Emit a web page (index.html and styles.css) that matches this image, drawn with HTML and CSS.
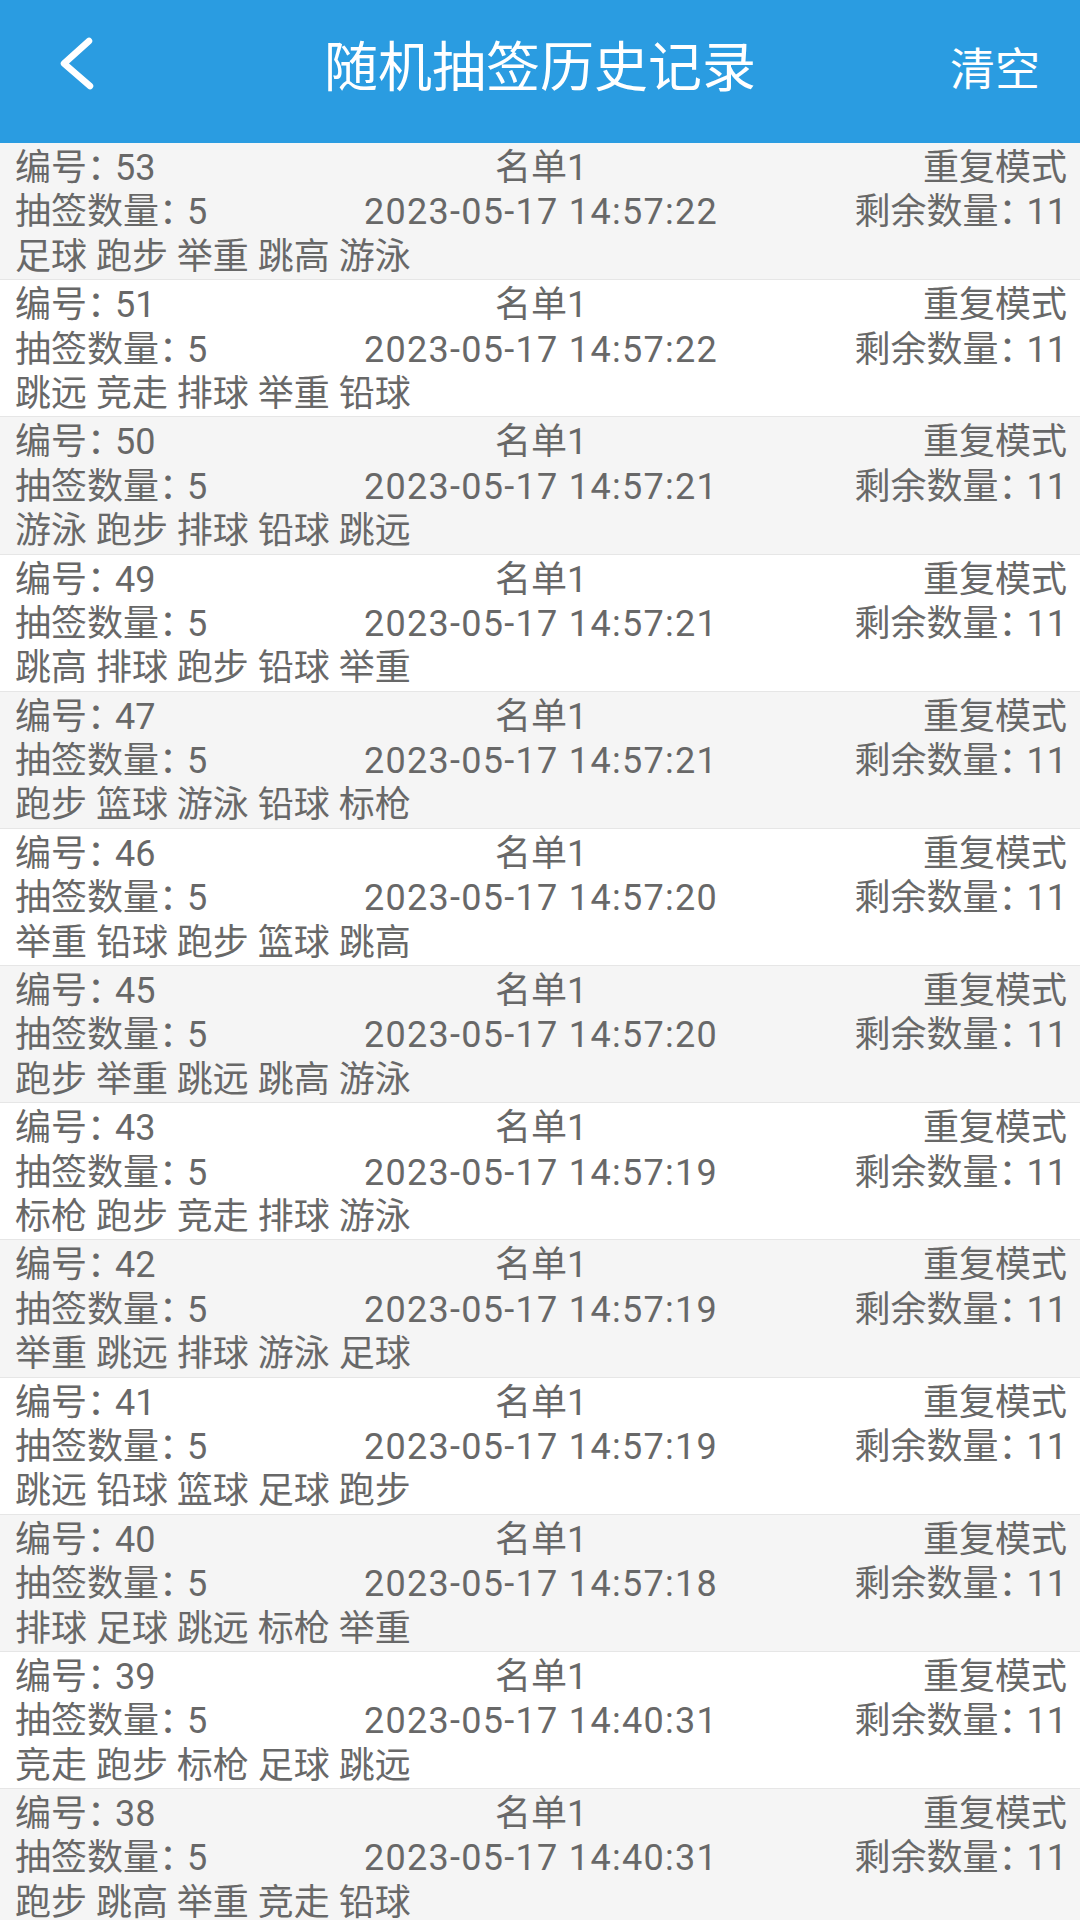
FILE: index.html
```html
<!DOCTYPE html>
<html lang="zh-CN">
<head>
<meta charset="utf-8">
<title>随机抽签历史记录</title>
<link rel="stylesheet" href="styles.css">
</head>
<body>
<header class="topbar">
  <div class="bar">
    <div class="back">
      <svg class="back-icon" viewBox="0 0 40 60" width="40" height="60" aria-hidden="true">
        <polyline points="29,4 4,26.5 30,49" fill="none" stroke="#fff" stroke-width="6.5" stroke-linecap="round" stroke-linejoin="round"/>
      </svg>
    </div>
    <div class="title">随机抽签历史记录</div>
    <div class="action">清空</div>
  </div>
</header>
<main class="list">
  <div class="rec">
    <div class="line"><span class="l">编号<span class="colon">：</span>53</span><span class="c">名单1</span><span class="r">重复模式</span></div>
    <div class="line"><span class="l">抽签数量<span class="colon">：</span>5</span><span class="c date">2023-05-17 14:57:22</span><span class="r">剩余数量<span class="colon">：</span>11</span></div>
    <div class="items">足球 跑步 举重 跳高 游泳</div>
  </div>
  <div class="rec">
    <div class="line"><span class="l">编号<span class="colon">：</span>51</span><span class="c">名单1</span><span class="r">重复模式</span></div>
    <div class="line"><span class="l">抽签数量<span class="colon">：</span>5</span><span class="c date">2023-05-17 14:57:22</span><span class="r">剩余数量<span class="colon">：</span>11</span></div>
    <div class="items">跳远 竞走 排球 举重 铅球</div>
  </div>
  <div class="rec">
    <div class="line"><span class="l">编号<span class="colon">：</span>50</span><span class="c">名单1</span><span class="r">重复模式</span></div>
    <div class="line"><span class="l">抽签数量<span class="colon">：</span>5</span><span class="c date">2023-05-17 14:57:21</span><span class="r">剩余数量<span class="colon">：</span>11</span></div>
    <div class="items">游泳 跑步 排球 铅球 跳远</div>
  </div>
  <div class="rec">
    <div class="line"><span class="l">编号<span class="colon">：</span>49</span><span class="c">名单1</span><span class="r">重复模式</span></div>
    <div class="line"><span class="l">抽签数量<span class="colon">：</span>5</span><span class="c date">2023-05-17 14:57:21</span><span class="r">剩余数量<span class="colon">：</span>11</span></div>
    <div class="items">跳高 排球 跑步 铅球 举重</div>
  </div>
  <div class="rec">
    <div class="line"><span class="l">编号<span class="colon">：</span>47</span><span class="c">名单1</span><span class="r">重复模式</span></div>
    <div class="line"><span class="l">抽签数量<span class="colon">：</span>5</span><span class="c date">2023-05-17 14:57:21</span><span class="r">剩余数量<span class="colon">：</span>11</span></div>
    <div class="items">跑步 篮球 游泳 铅球 标枪</div>
  </div>
  <div class="rec">
    <div class="line"><span class="l">编号<span class="colon">：</span>46</span><span class="c">名单1</span><span class="r">重复模式</span></div>
    <div class="line"><span class="l">抽签数量<span class="colon">：</span>5</span><span class="c date">2023-05-17 14:57:20</span><span class="r">剩余数量<span class="colon">：</span>11</span></div>
    <div class="items">举重 铅球 跑步 篮球 跳高</div>
  </div>
  <div class="rec">
    <div class="line"><span class="l">编号<span class="colon">：</span>45</span><span class="c">名单1</span><span class="r">重复模式</span></div>
    <div class="line"><span class="l">抽签数量<span class="colon">：</span>5</span><span class="c date">2023-05-17 14:57:20</span><span class="r">剩余数量<span class="colon">：</span>11</span></div>
    <div class="items">跑步 举重 跳远 跳高 游泳</div>
  </div>
  <div class="rec">
    <div class="line"><span class="l">编号<span class="colon">：</span>43</span><span class="c">名单1</span><span class="r">重复模式</span></div>
    <div class="line"><span class="l">抽签数量<span class="colon">：</span>5</span><span class="c date">2023-05-17 14:57:19</span><span class="r">剩余数量<span class="colon">：</span>11</span></div>
    <div class="items">标枪 跑步 竞走 排球 游泳</div>
  </div>
  <div class="rec">
    <div class="line"><span class="l">编号<span class="colon">：</span>42</span><span class="c">名单1</span><span class="r">重复模式</span></div>
    <div class="line"><span class="l">抽签数量<span class="colon">：</span>5</span><span class="c date">2023-05-17 14:57:19</span><span class="r">剩余数量<span class="colon">：</span>11</span></div>
    <div class="items">举重 跳远 排球 游泳 足球</div>
  </div>
  <div class="rec">
    <div class="line"><span class="l">编号<span class="colon">：</span>41</span><span class="c">名单1</span><span class="r">重复模式</span></div>
    <div class="line"><span class="l">抽签数量<span class="colon">：</span>5</span><span class="c date">2023-05-17 14:57:19</span><span class="r">剩余数量<span class="colon">：</span>11</span></div>
    <div class="items">跳远 铅球 篮球 足球 跑步</div>
  </div>
  <div class="rec">
    <div class="line"><span class="l">编号<span class="colon">：</span>40</span><span class="c">名单1</span><span class="r">重复模式</span></div>
    <div class="line"><span class="l">抽签数量<span class="colon">：</span>5</span><span class="c date">2023-05-17 14:57:18</span><span class="r">剩余数量<span class="colon">：</span>11</span></div>
    <div class="items">排球 足球 跳远 标枪 举重</div>
  </div>
  <div class="rec">
    <div class="line"><span class="l">编号<span class="colon">：</span>39</span><span class="c">名单1</span><span class="r">重复模式</span></div>
    <div class="line"><span class="l">抽签数量<span class="colon">：</span>5</span><span class="c date">2023-05-17 14:40:31</span><span class="r">剩余数量<span class="colon">：</span>11</span></div>
    <div class="items">竞走 跑步 标枪 足球 跳远</div>
  </div>
  <div class="rec">
    <div class="line"><span class="l">编号<span class="colon">：</span>38</span><span class="c">名单1</span><span class="r">重复模式</span></div>
    <div class="line"><span class="l">抽签数量<span class="colon">：</span>5</span><span class="c date">2023-05-17 14:40:31</span><span class="r">剩余数量<span class="colon">：</span>11</span></div>
    <div class="items">跑步 跳高 举重 竞走 铅球</div>
  </div>
</main>
</body>
</html>
```

FILE: styles.css
```css
html, body {
  margin: 0;
  padding: 0;
  background: #ffffff;
}
body {
  width: 1080px;
  height: 1920px;
  overflow: hidden;
  font-family: Roboto, "Noto Sans CJK SC", sans-serif;
  color: #686868;
}
.topbar {
  height: 143px;
  background: #2a9ce1;
  box-sizing: border-box;
  padding-bottom: 10px;
}
.bar {
  height: 133px;
  display: grid;
  grid-template-columns: 1fr auto 1fr;
  align-items: center;
}
.back {
  padding-left: 60px;
  display: flex;
  align-items: center;
}
.back-icon {
  display: block;
}
.title {
  font-family: "Noto Sans CJK SC", sans-serif;
  font-size: 54px;
  color: #ffffff;
  line-height: 1;
  padding-bottom: 5px;
}
.action {
  justify-self: end;
  padding-right: 40px;
  font-family: "Noto Sans CJK SC", sans-serif;
  font-size: 45px;
  color: #ffffff;
  line-height: 1;
}
.list {
  display: flex;
  flex-direction: column;
}
.rec {
  padding: 3px 13px 0 15px;
  border-bottom: 1px solid #e6e6e6;
  background: #f5f5f5;
  font-size: 36px;
  line-height: 44.4px;
}
.rec:nth-child(even) {
  background: #ffffff;
}
.line {
  display: grid;
  grid-template-columns: 1fr auto 1fr;
  white-space: nowrap;
  height: 44.4px;
}
.l {
  justify-self: start;
}
.c {
  justify-self: center;
}
.r {
  justify-self: end;
}
.colon {
  margin-left: 0;
  letter-spacing: -8px;
}
.date {
  letter-spacing: 1.3px;
}
.items {
  white-space: nowrap;
  height: 44.4px;
}
```
